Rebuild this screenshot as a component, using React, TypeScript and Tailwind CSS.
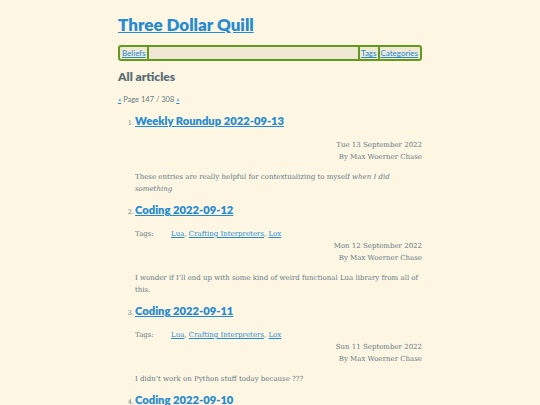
import React from 'react';

const sans = "font-['Lato','Open_Sans',sans-serif]";
const serif = "font-['DejaVu_Serif','Liberation_Serif',serif]";

interface Article {
  title: string;
  date: string;
  tags?: string[];
  excerpt: React.ReactNode;
}

const articles: Article[] = [
  {
    title: 'Weekly Roundup 2022-09-13',
    date: 'Tue 13 September 2022',
    excerpt: (
      <>
        These entries are really helpful for contextualizing to myself <em>when I did something</em>
      </>
    ),
  },
  {
    title: 'Coding 2022-09-12',
    date: 'Mon 12 September 2022',
    tags: ['Lua', 'Crafting Interpreters', 'Lox'],
    excerpt: 'I wonder if I\u2019ll end up with some kind of weird functional Lua library from all of this.',
  },
  {
    title: 'Coding 2022-09-11',
    date: 'Sun 11 September 2022',
    tags: ['Lua', 'Crafting Interpreters', 'Lox'],
    excerpt: 'I didn\u2019t work on Python stuff today because ???',
  },
  {
    title: 'Coding 2022-09-10',
    date: 'Sat 10 September 2022',
    tags: ['Lua', 'Crafting Interpreters', 'Lox'],
    excerpt: 'More work on the Lox interpreter.',
  },
];

const link = 'text-[#268bd2] underline';

const App: React.FC = () => {
  return (
    <div className="min-h-screen bg-[#fdf6e3] text-[#657b83]">
      <div className="mx-auto w-[304px] pt-[15px]">
        <h1 className={`${sans} text-[17px] font-extrabold leading-[20px]`}>
          <a href="#" className={link}>Three Dollar Quill</a>
        </h1>

        <nav className={`${sans} mt-[10px] flex h-[16px] items-stretch rounded-[3px] border-2 border-[#639a1d] bg-[#eee8d5] px-[1px] text-[8px] leading-[12px]`}>
          <a href="#" className={`${link} px-[1px]`}>Beliefs</a>
          <div className="flex-1 border-x-2 border-[#639a1d]" />
          <a href="#" className={`${link} px-[1px]`}>Tags</a>
          <div className="w-[2px] bg-[#639a1d]" />
          <a href="#" className={`${link} px-[1px]`}>Categories</a>
        </nav>

        <h2 className={`${sans} mt-[8px] text-[12px] font-extrabold leading-[16px] text-[#586e75]`}>All articles</h2>

        <p className={`${sans} mt-[10px] text-[7.5px] leading-[10px]`}>
          <a href="#" className={link}>«</a> Page 147 / 308 <a href="#" className={link}>»</a>
        </p>

        <ol className="mt-[7px] flex flex-col">
          {articles.map((a, i) => (
            <li key={a.title} className="flex flex-col pb-[6px]">
              <div className="flex items-baseline">
                <span className={`${serif} w-[17px] pr-[1px] text-right text-[6.5px]`}>{i + 1}.</span>
                <a href="#" className={`${sans} ${link} text-[11.2px] font-extrabold leading-[18px]`}>{a.title}</a>
              </div>
              <div className={`${serif} ml-[17px] mt-[9px] text-[7px] leading-[12px]`}>
                {a.tags && (
                  <div className="flex">
                    <span className="w-[36px]">Tags:</span>
                    <span>
                      {a.tags.map((t, j) => (
                        <React.Fragment key={t}>
                          <a href="#" className={link}>{t}</a>
                          {j < a.tags!.length - 1 ? ', ' : ''}
                        </React.Fragment>
                      ))}
                    </span>
                  </div>
                )}
                <div className="text-right">{a.date}</div>
                <div className="text-right">By Max Woerner Chase</div>
                <p className="mt-[8px]">{a.excerpt}</p>
              </div>
            </li>
          ))}
        </ol>
      </div>
    </div>
  );
};

export default App;
